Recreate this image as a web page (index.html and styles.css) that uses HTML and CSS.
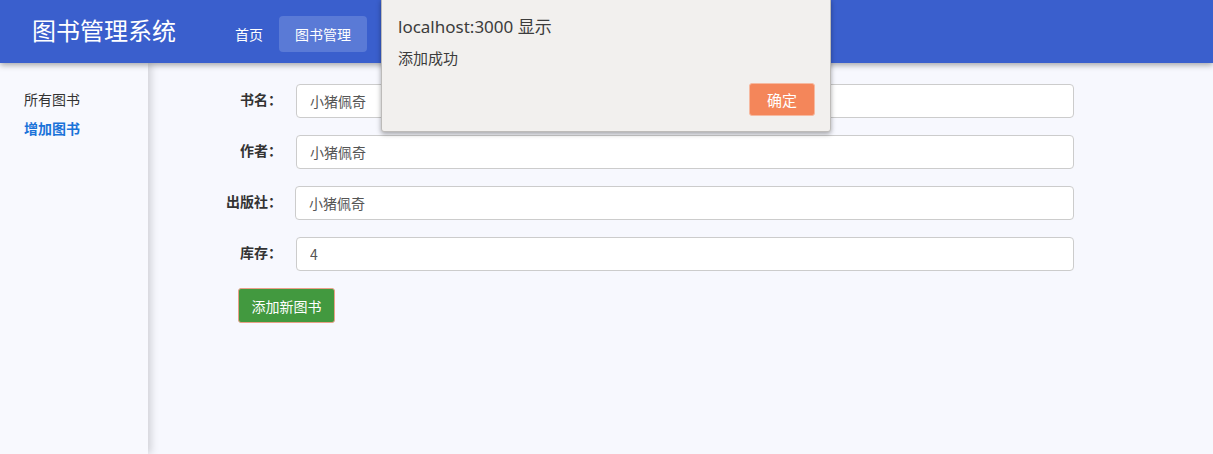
FILE: index.html
```html
<!DOCTYPE html>
<html lang="zh">
<head>
<meta charset="utf-8">
<title>图书管理系统</title>
<link rel="stylesheet" href="styles.css">
</head>
<body>
<header class="topbar">
  <div class="brand">图书管理系统</div>
  <nav class="nav">
    <a class="nav-item">首页</a>
    <a class="nav-item active">图书管理</a>
  </nav>
</header>
<div class="layout">
  <aside class="sidebar">
    <a class="side-item">所有图书</a>
    <a class="side-item current">增加图书</a>
  </aside>
  <main class="main">
    <form class="book-form">
      <label class="f-label">书名：</label>
      <input class="f-input" type="text" value="小猪佩奇">
      <label class="f-label">作者：</label>
      <input class="f-input" type="text" value="小猪佩奇">
      <label class="f-label">出版社：</label>
      <input class="f-input f-input-shift" type="text" value="小猪佩奇">
      <label class="f-label">库存：</label>
      <input class="f-input" type="text" value="4">
      <div class="f-actions">
        <button class="btn-add" type="button">添加新图书</button>
      </div>
    </form>
  </main>
</div>
<div class="alert">
  <div class="alert-title">localhost:3000 显示</div>
  <div class="alert-msg">添加成功</div>
  <div class="alert-actions">
    <button class="alert-ok" type="button">确定</button>
  </div>
</div>
</body>
</html>
```

FILE: styles.css
```css
* { box-sizing: border-box; }
html, body { margin: 0; padding: 0; height: 100%; }
body {
  font-family: "Noto Sans", "Noto Sans CJK SC", sans-serif;
  background: #f7f8fe;
  overflow: hidden;
  position: relative;
}
.topbar {
  height: 63px;
  background: #3a5fcd;
  display: flex;
  align-items: center;
  padding-left: 32px;
  box-shadow: 0 2px 6px rgba(0,0,0,0.35);
  position: relative;
  z-index: 2;
}
.brand {
  color: #fff;
  font-family: "Noto Sans CJK SC", sans-serif;
  font-size: 24px;
  line-height: 1;
  margin-top: -4px;
  width: 195px;
}
.nav { display: flex; align-items: center; gap: 0; margin-top: 5px; }
.nav-item {
  color: #fff;
  font-family: "Noto Sans CJK SC", sans-serif;
  font-size: 14px;
  height: 36px;
  display: flex;
  align-items: center;
  padding: 0 8px;
  border-radius: 4px;
}
.nav-item.active {
  background: #5a7ad6;
  padding: 0 16px;
  margin-left: 8px;
}
.layout {
  display: flex;
  height: calc(100% - 63px);
}
.sidebar {
  width: 148px;
  background: #f8f9fe;
  padding: 26px 0 0 24px;
  display: flex;
  flex-direction: column;
  gap: 9px;
  box-shadow: 3px 0 8px rgba(0,0,0,0.16);
  position: relative;
  z-index: 1;
}
.side-item {
  font-family: "Noto Sans CJK SC", sans-serif;
  font-size: 14px;
  color: #333;
  line-height: 20px;
}
.side-item.current { color: #1a73d9; font-weight: bold; }
.main {
  flex: 1;
  padding: 21px 0 0 64px;
}
.book-form {
  display: grid;
  grid-template-columns: 70px 778px;
  column-gap: 14px;
  row-gap: 17px;
  align-items: center;
}
.f-label {
  text-align: right;
  font-family: "Noto Sans CJK SC", sans-serif;
  font-size: 14px;
  font-weight: bold;
  color: #333;
  margin-top: -4px;
}
.f-input {
  height: 34px;
  border: 1px solid #cccccc;
  border-radius: 4px;
  background: #fff;
  padding: 0 13px;
  font-family: "Noto Sans CJK SC", sans-serif;
  font-size: 14px;
  color: #555;
}
.f-input-shift { margin-left: -1px; }
.f-actions { grid-column: 1 / 3; padding-left: 26px; }
.btn-add {
  width: 97px;
  height: 35px;
  background: #42993f;
  border: 1px solid #eaa088;
  border-radius: 3px;
  color: #fff;
  font-family: "Noto Sans CJK SC", sans-serif;
  font-size: 14px;
  padding: 0;
}
.alert {
  position: absolute;
  left: 381px;
  top: -1px;
  width: 450px;
  height: 133px;
  background: #f2f0ee;
  border: 1px solid #bdbbb9;
  border-radius: 0 0 3px 3px;
  box-shadow: 0 2px 5px rgba(0,0,0,0.35);
  padding: 15px 15px 0 16px;
  z-index: 10;
  display: flex;
  flex-direction: column;
}
.alert-title {
  font-family: "Noto Sans", "Noto Sans CJK SC", sans-serif;
  font-size: 17px;
  color: #3c3c3c;
  line-height: 24px;
}
.alert-msg {
  font-family: "Noto Sans CJK SC", sans-serif;
  font-size: 15px;
  color: #3c3c3c;
  line-height: 22px;
  margin-top: 8px;
}
.alert-actions {
  display: flex;
  justify-content: flex-end;
  margin-top: 14px;
}
.alert-ok {
  width: 66px;
  height: 33px;
  background: #f4865a;
  border: 1px solid #f6b9a0;
  border-radius: 3px;
  color: #fff;
  font-family: "Noto Sans CJK SC", sans-serif;
  font-size: 15px;
  padding: 0;
}
```
